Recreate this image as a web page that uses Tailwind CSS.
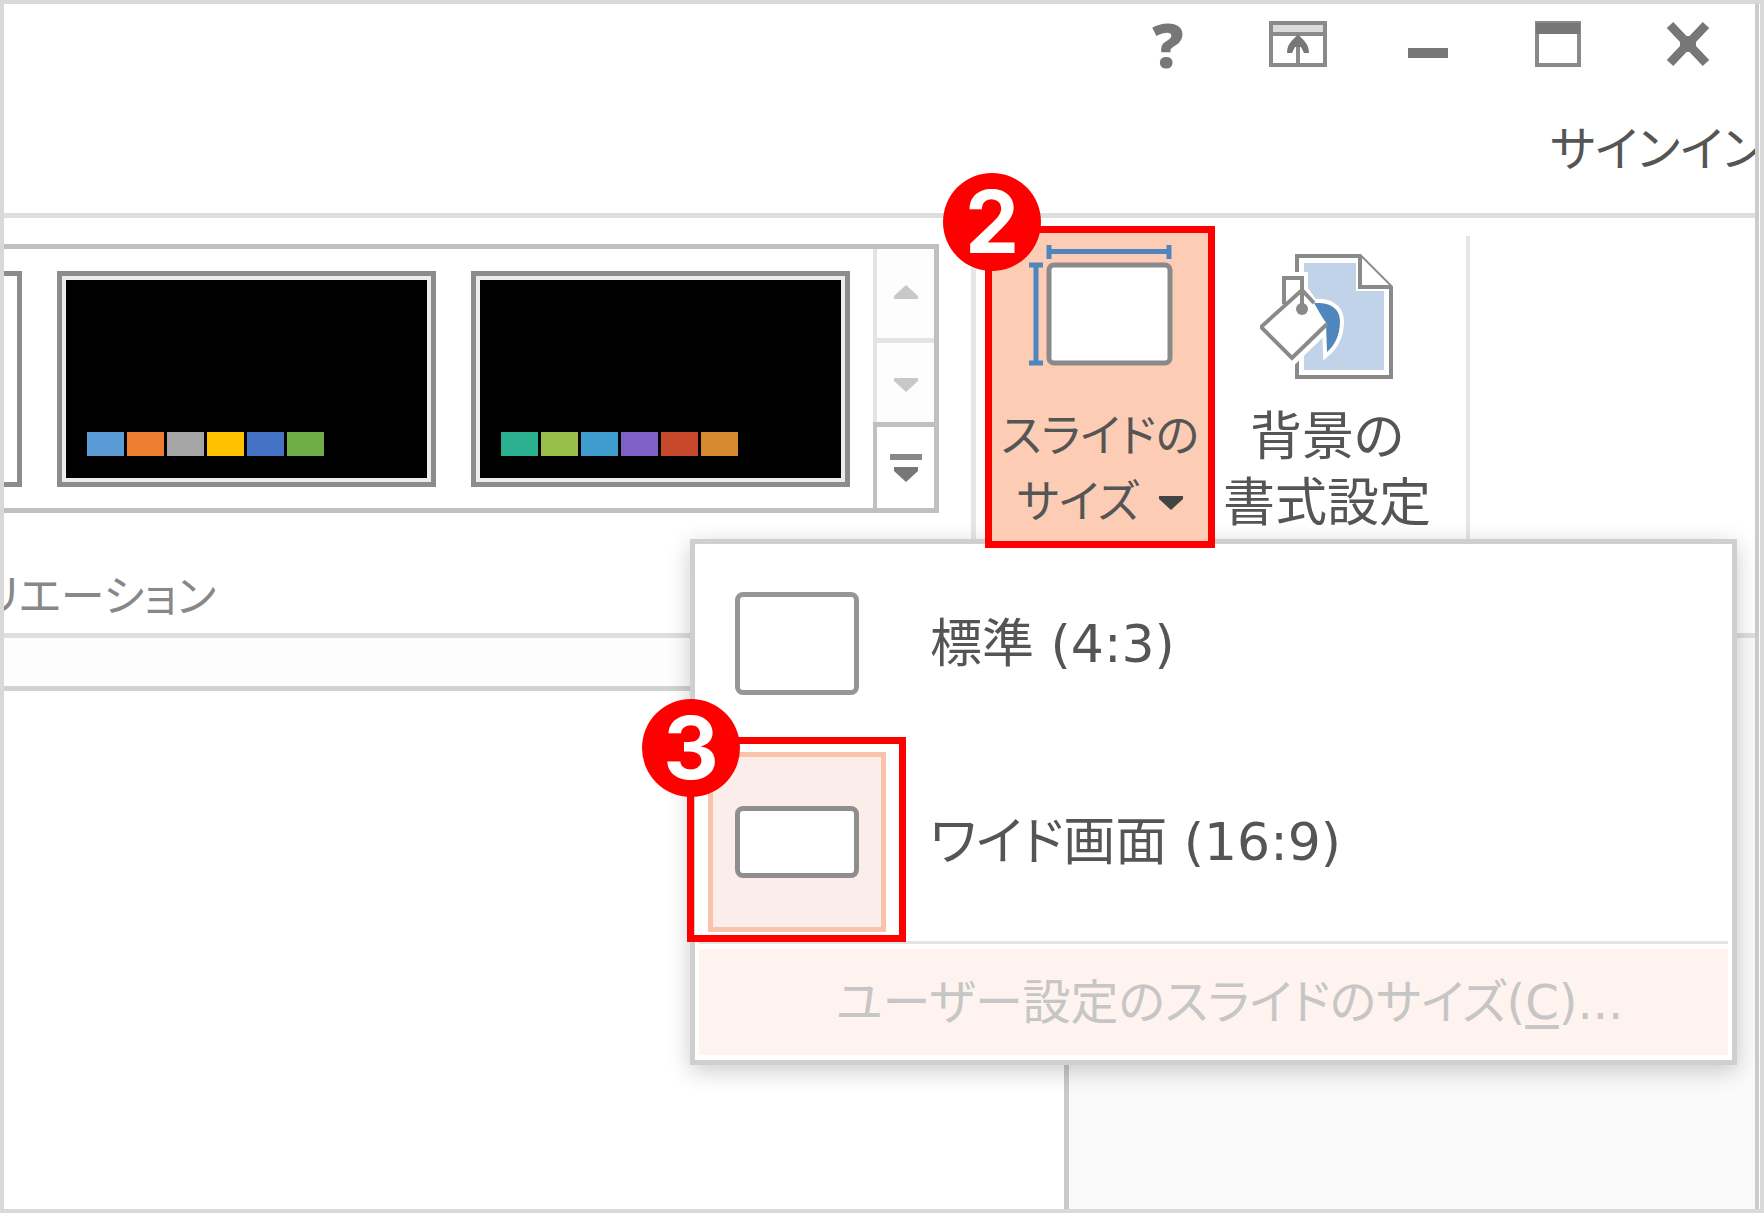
<!doctype html>
<html lang="ja">

<head>
    <meta charset="UTF-8">
    <meta name="viewport" content="width=device-width, initial-scale=1.0">
    <script src="https://cdn.jsdelivr.net/npm/@tailwindcss/browser@4"></script>
    <title>スライドのサイズ</title>
</head>

<body class="bg-white font-['DejaVu_Sans','Noto_Sans_CJK_JP',sans-serif] [font-feature-settings:'palt'] text-[#555]">
    <div class="min-h-screen flex flex-col border-4 border-[#d9d9d9] overflow-hidden">
        <div class="flex-1 flex flex-col border-r-4 border-[#ccc] mr-px">

            <!-- title bar -->
            <header class="pt-[17px] pb-8 border-b-5 border-[#dedede]">
                <div class="flex justify-end h-[46px] pr-0.5 text-[#777]">
                    <button aria-label="ヘルプ" class="w-[130px] flex items-center justify-center font-['Open_Sans',sans-serif] text-[62px] leading-[46px] font-extrabold">?</button>
                    <button aria-label="リボンの表示オプション" class="w-[130px] flex justify-center">
                        <svg width="58" height="46" viewBox="0 0 58 46" fill="none">
                            <rect x="2" y="2" width="54" height="42" stroke="#8a8a8a" stroke-width="4" />
                            <path d="M4 4h50v7H4z" fill="#dcdcdc" />
                            <path d="M2 13h54" stroke="#8a8a8a" stroke-width="4" />
                            <path d="M29 43V16" stroke="#8a8a8a" stroke-width="4" />
                            <path d="M29 13c3 5 11 8 11 19h-5l-3-6h-6l-3 6h-5c0-11 8-14 11-19z" fill="#777" />
                        </svg>
                    </button>
                    <button aria-label="最小化" class="w-[130px] flex justify-center">
                        <svg width="42" height="46" viewBox="0 0 42 46"><rect x="1" y="27" width="40" height="10" fill="#777" /></svg>
                    </button>
                    <button aria-label="最大化" class="w-[130px] flex justify-center">
                        <svg width="46" height="46" viewBox="0 0 46 46" fill="none">
                            <rect x="2" y="2" width="42" height="42" stroke="#8a8a8a" stroke-width="4" />
                            <path d="M1 2h44v11H1z" fill="#777" />
                        </svg>
                    </button>
                    <button aria-label="閉じる" class="w-[130px] flex justify-center">
                        <svg width="46" height="46" viewBox="0 0 46 46"><path d="M5 4l36 38M41 4L5 42" stroke="#777" stroke-width="9" /><path d="M15 15h16v16H15z" fill="#777" /></svg>
                    </button>
                </div>
                <div class="flex justify-end mt-[50px]">
                    <a href="#" class="w-[205px] overflow-hidden whitespace-nowrap text-[48px] leading-[64px]">サインイン</a>
                </div>
            </header>

            <!-- ribbon -->
            <section class="flex h-[420px] border-b-5 border-[#dedede]">
                <div class="w-[967px] shrink-0 pt-[26px]">
                    <div class="flex w-[935px] h-[269px] border-y-5 border-r-5 border-[#c0c0c2]">
                        <div class="flex-1 flex items-center gap-[35px]">
                            <button aria-label="バリエーション 2" class="w-[18px] h-[216px] border-y-5 border-r-5 border-[#8c8c8c]"></button>
                            <button aria-label="バリエーション 3" class="w-[379px] h-[216px] border-5 border-[#8c8c8c] bg-[#ececec] p-1">
                                <span class="flex items-end gap-[3px] h-full bg-black pl-[21px] pb-[22px]">
                                    <span class="w-[37px] h-6 bg-[#5b9bd5]"></span>
                                    <span class="w-[37px] h-6 bg-[#ed7d31]"></span>
                                    <span class="w-[37px] h-6 bg-[#a5a5a5]"></span>
                                    <span class="w-[37px] h-6 bg-[#ffc000]"></span>
                                    <span class="w-[37px] h-6 bg-[#4472c4]"></span>
                                    <span class="w-[37px] h-6 bg-[#70ad47]"></span>
                                </span>
                            </button>
                            <button aria-label="バリエーション 4" class="w-[379px] h-[216px] border-5 border-[#8c8c8c] bg-[#ececec] p-1">
                                <span class="flex items-end gap-[3px] h-full bg-black pl-[21px] pb-[22px]">
                                    <span class="w-[37px] h-6 bg-[#2bb08f]"></span>
                                    <span class="w-[37px] h-6 bg-[#99bf4a]"></span>
                                    <span class="w-[37px] h-6 bg-[#3e9ccf]"></span>
                                    <span class="w-[37px] h-6 bg-[#7f60c4]"></span>
                                    <span class="w-[37px] h-6 bg-[#c8482c]"></span>
                                    <span class="w-[37px] h-6 bg-[#d68c2e]"></span>
                                </span>
                            </button>
                        </div>
                        <div class="w-[61px] flex flex-col">
                            <button aria-label="上へ" class="h-[94px] flex items-center justify-center bg-[#fdfdfd] border-l-4 border-b-5 border-[#e4e4e4] pb-1">
                                <svg width="26" height="14" viewBox="0 0 26 14"><path d="M13 0l12 11v3H1v-3z" fill="#c8c8c8" /></svg>
                            </button>
                            <button aria-label="下へ" class="h-[79px] flex items-center justify-center bg-[#fdfdfd] border-l-4 border-[#e4e4e4] pt-1">
                                <svg width="26" height="14" viewBox="0 0 26 14"><path d="M13 14L25 3V0H1v3z" fill="#c8c8c8" /></svg>
                            </button>
                            <button aria-label="その他" class="flex-1 flex items-center justify-center border-l-4 border-t-5 border-[#c0c0c2]">
                                <svg width="34" height="28" viewBox="0 0 34 28"><path d="M1 0h32v6H1z" fill="#888" /><path d="M17 28L29 17v-4H5v4z" fill="#777" /></svg>
                            </button>
                        </div>
                    </div>
                    <div class="flex justify-end w-[212px] mt-[52px] overflow-hidden whitespace-nowrap text-[44px] leading-[64px] text-[#888]">リエーション</div>
                </div>

                <div class="w-[5px] shrink-0 mt-[18px] bg-[#e6e6e6]"></div>

                <div class="relative w-[230px] shrink-0 ml-[9px] mt-2">
                    <button aria-haspopup="menu" aria-expanded="true" class="relative z-20 w-full h-[322px] flex flex-col items-center border-7 border-[#f00] bg-[#fcccb5] pt-3 text-[45px] leading-[66px]">
                        <svg class="shrink-0" width="146" height="122" viewBox="0 0 146 122" fill="none">
                            <path d="M22 6.5h120M22 0v14M142 0v14" stroke="#4f86bd" stroke-width="5" />
                            <path d="M9 20v98M2 20h14M2 118h14" stroke="#4f86bd" stroke-width="5" />
                            <rect x="22" y="20" width="121" height="98" rx="5" fill="#fff" stroke="#8a8a8a" stroke-width="5" />
                        </svg>
                        <span class="mt-[37px] whitespace-nowrap">スライドの</span>
                        <span class="flex items-center gap-5 whitespace-nowrap">サイズ
                            <svg width="24" height="14" viewBox="0 0 24 14"><path d="M0 0h24v3L12 14 0 3z" fill="#444" /></svg>
                        </span>
                    </button>
                    <span class="absolute z-30 -left-[42px] -top-[53px] size-[98px] rounded-full bg-[#f00] text-white flex items-center justify-center font-[Inter,sans-serif] font-bold text-[86px] leading-none">2</span>

                    <!-- drop-down menu -->
                    <div role="menu" class="absolute z-10 top-[313px] -left-[295px] w-[1047px] bg-white border-5 border-[#cfcfcf] pb-[5px] shadow-[0_6px_22px_rgba(0,0,0,0.2)] text-[52px] leading-[66px]">
                        <button role="menuitem" class="w-full h-[199px] pl-[13px] flex items-center gap-11">
                            <span class="w-[178px] h-[180px] flex items-center justify-center">
                                <span class="w-[124px] h-[103px] rounded-[8px] border-5 border-[#969696] bg-white"></span>
                            </span>
                            標準 (4:3)
                        </button>
                        <button role="menuitem" class="w-full h-[198px] pl-[13px] flex items-center gap-11">
                            <span class="relative w-[178px] h-[180px] flex items-center justify-center border-5 border-[#f8c3aa] bg-[#fbeeea]">
                                <span class="w-[124px] h-[72px] rounded-[8px] border-5 border-[#8e8e8e] bg-white"></span>
                                <span class="absolute -left-[26px] -top-5 -right-[25px] -bottom-[15px] border-7 border-[#f00]"></span>
                                <span class="absolute -left-[71px] -top-[58px] size-[98px] rounded-full bg-[#f00] text-white flex items-center justify-center font-[Inter,sans-serif] font-bold text-[86px] leading-none">3</span>
                            </span>
                            ワイド画面 (16:9)
                        </button>
                        <hr class="border-0 h-[3px] mx-1 mb-[5px] bg-[#e4e4e8]">
                        <div class="px-1">
                            <button role="menuitem" disabled class="w-full h-[106px] pl-[137px] text-left bg-[#fef3ef] text-[48px] text-[#c6c6c6] whitespace-nowrap">ユーザー設定のスライドのサイズ(<span class="underline underline-offset-6 decoration-4">C</span>)...</button>
                        </div>
                    </div>
                </div>

                <button class="w-[224px] shrink-0 mt-2 h-[322px] pt-7 flex flex-col items-center text-[52px] leading-[66px]">
                    <svg class="shrink-0" width="134" height="125" viewBox="1261 254 134 125" fill="none">
                        <path d="M1298 256h63l31 31v90h-94z" fill="#fff" stroke="#8a8a8a" stroke-width="4" />
                        <path d="M1305 263h52v28h28v79h-80z" fill="#c1d3e8" />
                        <path d="M1361 256v31h31" fill="#fff" stroke="#8a8a8a" stroke-width="4" />
                        <path d="M1285 304v-26h18v12l25 35-35 34-31-32z" fill="#fff" stroke="#fff" stroke-width="12" />
                        <path d="M1315 303c14-1 26 4 26 18 0 14-5 24-13 31l-1-28z" fill="#4f86bd" stroke="#fff" stroke-width="8" />
                        <path d="M1315 303c14-1 26 4 26 18 0 14-5 24-13 31l-1-28z" fill="#4f86bd" />
                        <path d="M1303 289l25 35-35 34-31-31z" fill="#fff" />
                        <path d="M1315 303l-12-13-41 37 31 31 35-34" stroke="#8a8a8a" stroke-width="4" />
                        <path d="M1285 304v-26h18v28" stroke="#8a8a8a" stroke-width="4" />
                        <circle cx="1303" cy="309" r="6" fill="#8a8a8a" />
                    </svg>
                    <span class="mt-[25px] whitespace-nowrap">背景の</span>
                    <span class="whitespace-nowrap">書式設定</span>
                </button>

                <div class="w-1 shrink-0 ml-[27px] mt-[18px] bg-[#e6e6e6]"></div>
            </section>

            <!-- workspace -->
            <main class="flex-1 flex">
                <div class="w-[1065px] shrink-0 border-r-5 border-[#cacaca]">
                    <div class="h-[53px] bg-[#fdfdfd] border-b-5 border-[#d2d2d2]"></div>
                </div>
                <div class="flex-1 bg-[#fafafa]"></div>
            </main>
        </div>
    </div>
</body>

</html>
